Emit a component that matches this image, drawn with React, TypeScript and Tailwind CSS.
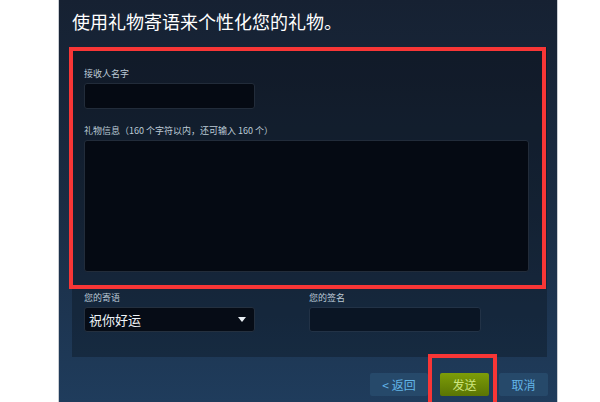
import React from "react";

const cjk = { fontFamily: '"Noto Sans CJK SC", "Noto Sans", sans-serif' };

export default function App() {
  return (
    <div className="w-[600px] h-[402px] bg-white overflow-hidden flex" style={cjk}>
      <div className="relative ml-[58px] w-[500px] h-[402px] border-x border-[#c9cdd3] bg-gradient-to-b from-[#162132] via-[#1a2c43] to-[#1f3c5c] flex flex-col">
        <div className="pl-[13px] pt-[9px] text-[18px] leading-[24px] text-white">
          使用礼物寄语来个性化您的礼物。
        </div>
        <div className="ml-[13px] mt-[14px] w-[475px] bg-black/25 pl-[12px] pt-[21px] pb-[25px] flex flex-col">
          <div className="text-[9px] leading-[12px] text-[#bccad6]">接收人名字</div>
          <div className="mt-[3px] w-[171px] h-[26px] rounded-[3px] border border-[#222c3a] bg-[#050a13]" />
          <div className="mt-[16px] text-[9px] leading-[12px] text-[#bccad6]">
            礼物信息（160 个字符以内，还可输入 160 个）
          </div>
          <div className="mt-[3px] w-[445px] h-[132px] rounded-[3px] border border-[#222c3a] bg-[#050a13]" />
          <div className="mt-[20px] flex">
            <div className="w-[225px] flex flex-col">
              <div className="text-[9px] leading-[12px] text-[#bccad6]">您的寄语</div>
              <div className="mt-[3px] w-[171px] h-[25px] rounded-[3px] border border-[#24303f] bg-[#060c16] flex items-center justify-between pl-[4px] pr-[8px]">
                <span className="text-[13px] leading-[16px] text-[#eef3f7]">祝你好运</span>
                <svg width="8" height="5" viewBox="0 0 8 5">
                  <path d="M0 0 L8 0 L4 5 Z" fill="#e8eef3" />
                </svg>
              </div>
            </div>
            <div className="flex flex-col">
              <div className="text-[9px] leading-[12px] text-[#bccad6]">您的签名</div>
              <div className="mt-[3px] w-[172px] h-[25px] rounded-[3px] border border-[#223246] bg-[#0a1524]" />
            </div>
          </div>
        </div>
        <div className="mt-[16px] pr-[9px] flex justify-end gap-[10px]">
          <div className="w-[58px] h-[23px] mr-[2px] rounded-[2px] bg-[#26496a] text-[#63b5e8] text-[12px] leading-[23px] text-center">
            &lt; 返回
          </div>
          <div className="w-[49px] h-[23px] rounded-[2px] bg-gradient-to-b from-[#7d9d08] to-[#5a7504] text-[#cfe67f] text-[12px] leading-[23px] text-center">
            发送
          </div>
          <div className="w-[49px] h-[23px] rounded-[2px] bg-[#26496a] text-[#63b5e8] text-[12px] leading-[23px] text-center">
            取消
          </div>
        </div>

        <div className="absolute left-[10px] top-[47px] w-[477px] h-[242px] border-[4px] border-[#f83636]" />
        <div className="absolute left-[369px] top-[354px] w-[69px] h-[52px] border-[4px] border-[#f83636]" />
      </div>
    </div>
  );
}
